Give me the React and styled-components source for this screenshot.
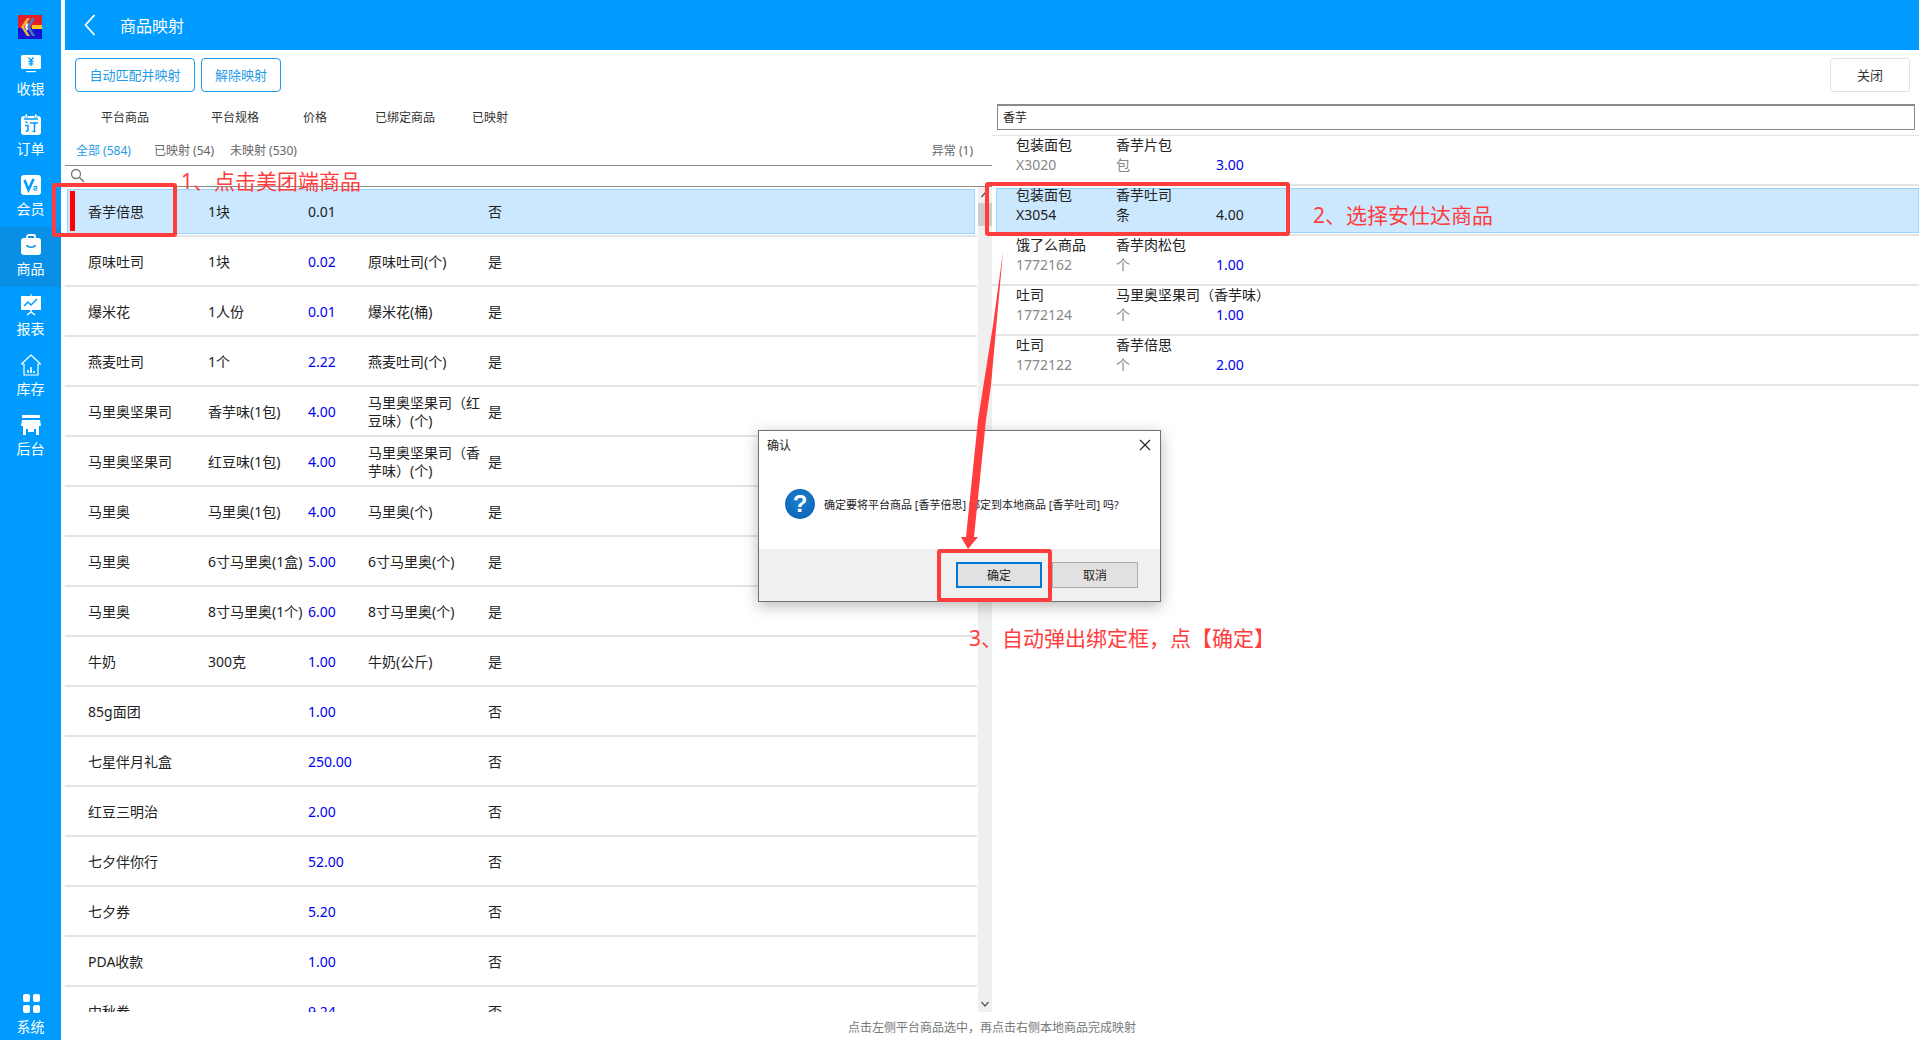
import React from 'react';
import styled, { createGlobalStyle } from 'styled-components';

const FONT = '"Noto Sans", "Noto Sans CJK SC", sans-serif';
const BLUE = '#009bff';
const RED = '#ff3d3d';

const GlobalStyle = createGlobalStyle`
  html, body { margin: 0; padding: 0; background: #fff; }
  body { font-family: ${FONT}; color: #222; }
  * { box-sizing: border-box; }
`;

const Page = styled.div`
  position: relative;
  width: 100vw;
  height: 100vh;
  overflow: hidden;
  display: flex;
  background: #fff;
`;

// Barra lateral
const Sidebar = styled.nav`
  width: 61px;
  flex: none;
  background: ${BLUE};
  display: flex;
  flex-direction: column;
`;
const LogoBox = styled.div`
  height: 47px;
  padding: 15px 0 0 18px;
`;
const NavItem = styled.div`
  height: 60px;
  display: flex;
  flex-direction: column;
  align-items: center;
  justify-content: flex-end;
  padding-bottom: ${(p) => (p.$last ? '4px' : '9px')};
  color: #fff;
  font-size: 14px;
  line-height: 18px;
  gap: 3px;
  background: ${(p) => (p.$active ? '#0a8fe6' : 'transparent')};
  margin-top: ${(p) => (p.$last ? 'auto' : '0')};
  svg { display: block; }
`;

const Main = styled.div`
  flex: 1;
  min-width: 0;
  margin-left: 4px;
  display: flex;
  flex-direction: column;
`;
const Header = styled.header`
  height: 50px;
  flex: none;
  background: ${BLUE};
  display: flex;
  align-items: center;
  padding: 0 0 1px 19px;
  gap: 24px;
  color: #fff;
  font-size: 16px;
`;
const Toolbar = styled.div`
  height: 50px;
  flex: none;
  display: flex;
  align-items: flex-start;
  padding: 8px 9px 0 10px;
  gap: 6px;
`;
const OutlineButton = styled.button`
  height: 34px;
  width: ${(p) => p.$w}px;
  padding: 0 0 2px;
  background: #fff;
  border: 1px solid #1f9bea;
  border-radius: 4px;
  color: #1f9bea;
  font: 13px ${FONT};
`;
const CloseButton = styled.button`
  height: 34px;
  width: 80px;
  margin-left: auto;
  padding: 0 0 2px;
  background: #fff;
  border: 1px solid #e2e2e2;
  border-radius: 3px;
  color: #333;
  font: 13px ${FONT};
`;

const Panels = styled.div`
  flex: 1;
  min-height: 0;
  display: flex;
`;
const LeftPanel = styled.section`
  width: 927px;
  flex: none;
  display: flex;
  flex-direction: column;
`;
const ColumnHead = styled.div`
  height: 34px;
  flex: none;
  display: flex;
  align-items: center;
  padding-left: 36px;
  font-size: 12px;
  color: #333;
`;
const HeadCell = styled.span`
  width: ${(p) => p.$w}px;
  flex: none;
`;
const Tabs = styled.div`
  height: 31px;
  flex: none;
  display: flex;
  align-items: center;
  padding: 0 19px 0 11px;
  font-size: 12px;
  color: #666;
`;
const Tab = styled.span`
  width: ${(p) => p.$w}px;
  color: ${(p) => (p.$active ? '#1f9bea' : '#666')};
`;
const TabRight = styled.span`
  margin-left: auto;
`;
const SearchRow = styled.div`
  height: 22px;
  flex: none;
  border-top: 1px solid #8a8a8a;
  border-bottom: 1px solid #8a8a8a;
  padding: 2px 0 0 5px;
  svg { display: block; }
`;
const ListArea = styled.div`
  height: 825px;
  flex: none;
  display: flex;
  overflow: hidden;
`;
const List = styled.div`
  flex: 1;
  min-width: 0;
  margin-right: 1px;
`;
const Row = styled.div`
  position: relative;
  height: 50px;
  border-bottom: 2px solid #e4e4e4;
  display: grid;
  grid-template-columns: 120px 100px 60px 120px 1fr;
  padding: 2px 0 0 23px;
  align-items: center;
  font-size: 14px;
  line-height: 18px;
  color: #222;
  ${(p) => p.$selected && `
    &::before {
      content: '';
      position: absolute;
      inset: 2px 2px 1px 2px;
      background: #cce8ff;
      border: 1px solid #99d1ff;
    }
    &::after {
      content: '';
      position: absolute;
      left: 5px;
      top: 4px;
      width: 5px;
      height: 40px;
      background: #f00;
    }
    & > span { position: relative; z-index: 1; }
  `}
`;
const Cell = styled.span`
  padding-right: 6px;
  white-space: ${(p) => (p.$wrap ? 'normal' : 'nowrap')};
`;
const Price = styled.span`
  color: ${(p) => (p.$plain ? '#222' : '#0000ee')};
`;
const ScrollTrack = styled.div`
  position: relative;
  width: 14px;
  flex: none;
  background: #efefef;
  svg { position: absolute; left: 3px; }
`;
const ScrollThumb = styled.div`
  position: absolute;
  left: 0;
  right: 0;
  top: 16px;
  height: 23px;
  background: #cdcdcd;
`;

const RightPanel = styled.section`
  flex: 1;
  min-width: 0;
  display: flex;
  flex-direction: column;
  padding-top: 4px;
`;
const SearchInput = styled.div`
  height: 26px;
  margin: 0 4px 5px 5px;
  padding-left: 5px;
  border: 1px solid #8a8a8a;
  border-top-width: 2px;
  font-size: 12px;
  line-height: 24px;
  color: #222;
`;
const RightList = styled.div`
  border-top: 1px solid #e4e4e4;
`;
const RightRow = styled.div`
  position: relative;
  height: 50px;
  border-bottom: 2px solid #e4e4e4;
  display: grid;
  grid-template-columns: 100px 100px 1fr;
  grid-auto-rows: 20px;
  padding-left: 24px;
  margin-top: 0;
  font-size: 14px;
  line-height: 18px;
  ${(p) => p.$selected && `
    &::before {
      content: '';
      position: absolute;
      inset: 2px 0 1px 4px;
      background: #cce8ff;
      border: 1px solid #99d1ff;
    }
    & > span { position: relative; z-index: 1; }
  `}
`;
const RightCell = styled.span`
  white-space: nowrap;
  color: ${(p) => (p.$muted ? '#888' : '#222')};
`;
const RightPrice = styled.span`
  color: ${(p) => (p.$plain ? '#222' : '#0000ee')};
`;

const Footer = styled.footer`
  height: 28px;
  flex: none;
  display: flex;
  align-items: center;
  justify-content: center;
  padding-top: 2px;
  font-size: 12px;
  color: #777;
`;

// Capas de anotación sobre la captura
const Note = styled.div`
  position: absolute;
  left: ${(p) => p.$x}px;
  top: ${(p) => p.$y}px;
  color: ${RED};
  font-size: 21px;
  line-height: 28px;
  white-space: nowrap;
  z-index: 5;
`;
const Mark = styled.div`
  position: absolute;
  left: ${(p) => p.$x}px;
  top: ${(p) => p.$y}px;
  width: ${(p) => p.$w}px;
  height: ${(p) => p.$h}px;
  border: 4px solid ${RED};
  border-radius: 3px;
  z-index: 5;
`;
const ArrowLayer = styled.svg`
  position: absolute;
  left: 0;
  top: 0;
  z-index: 4;
  pointer-events: none;
`;

const Dialog = styled.div`
  position: absolute;
  left: 758px;
  top: 430px;
  width: 403px;
  height: 172px;
  background: #fff;
  border: 1px solid #707070;
  box-shadow: 0 4px 14px rgba(0, 0, 0, 0.28);
  display: flex;
  flex-direction: column;
  z-index: 3;
`;
const DialogTitle = styled.div`
  height: 30px;
  flex: none;
  display: flex;
  align-items: center;
  justify-content: space-between;
  padding: 0 9px 2px 8px;
  font-size: 12px;
  color: #222;
`;
const DialogBody = styled.div`
  flex: 1;
  display: flex;
  align-items: center;
  gap: 9px;
  padding: 0 0 3px 26px;
  font-size: 11px;
  color: #222;
  white-space: nowrap;
`;
const QuestionIcon = styled.div`
  width: 30px;
  height: 30px;
  flex: none;
  border-radius: 50%;
  background: radial-gradient(circle at 50% 40%, #1a7fd0, #0a5fae);
  color: #fff;
  font: bold 24px/30px "Liberation Sans", sans-serif;
  text-align: center;
`;
const DialogFooter = styled.div`
  height: 52px;
  flex: none;
  background: #f0f0f0;
  display: flex;
  justify-content: flex-end;
  align-items: flex-start;
  gap: 10px;
  padding: 13px 22px 0 0;
`;
const DialogButton = styled.button`
  width: 86px;
  height: 26px;
  padding: 0;
  background: #e1e1e1;
  border: ${(p) => (p.$primary ? '2px solid #0078d7' : '1px solid #adadad')};
  font: 12px ${FONT};
  color: #222;
`;

const Logo = () => (
  <svg width="24" height="24" viewBox="0 0 24 24">
    <rect width="24" height="13" fill="#e3202a" />
    <rect y="13" width="24" height="11" fill="#1414d2" />
    <rect x="14" y="10" width="10" height="4" fill="#f6c51f" />
    <path d="M9 3 3 12l6 9h3l-6-9 6-9z" fill="#f2b23a" />
    <path d="M9 7 7 12l2 4 2-4z" fill="#fff" />
    <path d="M14 3 9 12l5 9h3l-5-9 5-9z" fill="#4c78c8" />
  </svg>
);

const Ico = ({ children }) => (
  <svg width="24" height="24" viewBox="0 0 24 24">{children}</svg>
);

const IconCash = () => (
  <Ico>
    <rect x="2" y="2" width="20" height="14" rx="1.500" fill="#fff" />
    <rect x="7" y="18" width="10" height="1.200" fill="#fff" />
    <path d="M9.500 4.500 12 7.500l2.500-3M12 7.500V13M9.500 8.500h5M9.500 10.800h5" stroke={BLUE} strokeWidth="1.300" fill="none" />
  </Ico>
);
const IconOrder = () => (
  <Ico>
    <rect x="2" y="3" width="20" height="19" rx="3" fill="#fff" />
    <rect x="6" y="1" width="2.500" height="4" rx="1" fill="#fff" stroke={BLUE} strokeWidth="0.600" />
    <rect x="15.500" y="1" width="2.500" height="4" rx="1" fill="#fff" stroke={BLUE} strokeWidth="0.600" />
    <path d="M5 6h14M6.500 8.500l2 1.500M6 12.500h3v5l-2 1M11 10h8M15.500 10v8.500h-2" stroke={BLUE} strokeWidth="1.500" fill="none" />
  </Ico>
);
const IconMember = () => (
  <Ico>
    <rect x="2" y="2" width="20" height="20" rx="3" fill="#fff" />
    <path d="M5.500 7l4 10 5-11" stroke={BLUE} strokeWidth="2.600" fill="none" />
    <path d="M14.500 13.500h3.500v1.700h-3v1.800h3.500" stroke={BLUE} strokeWidth="1" fill="none" />
  </Ico>
);
const IconGoods = () => (
  <Ico>
    <path d="M8 5V3.500C8 2.500 9 2 10 2h4c1 0 2 .5 2 1.500V5" stroke="#fff" strokeWidth="1.800" fill="none" />
    <rect x="2" y="5" width="20" height="17" rx="3" fill="#fff" />
    <path d="M7.500 12c1.500 3 7.500 3 9 0" stroke="#0a8fe6" strokeWidth="1.600" fill="none" />
  </Ico>
);
const IconReport = () => (
  <Ico>
    <rect x="11.500" y="1" width="1" height="2" fill="#fff" />
    <rect x="2" y="3" width="20" height="14" fill="#fff" />
    <path d="M5 13l4-4 3 3 6-6" stroke={BLUE} strokeWidth="1.500" fill="none" />
    <path d="M12 17v2M8 22l4-3 4 3" stroke="#fff" strokeWidth="1.500" fill="none" />
  </Ico>
);
const IconStock = () => (
  <Ico>
    <path d="M12 2 2.500 11H5v11h14V11h2.500z" stroke="#fff" strokeWidth="1.200" fill="none" strokeLinejoin="round" />
    <path d="M9 20v-3M12 20v-6M15 20v-2" stroke="#fff" strokeWidth="1.600" fill="none" />
  </Ico>
);
const IconShop = () => (
  <Ico>
    <rect x="3" y="2" width="18" height="3" fill="#fff" />
    <path d="M3 7h18l1 6H2z" fill="#fff" />
    <path fillRule="evenodd" d="M4 13h16v9h-3v-6H7v6H4z" fill="#fff" />
    <rect x="9" y="16" width="6" height="3" fill="#fff" />
  </Ico>
);
const IconSystem = () => (
  <Ico>
    <rect x="4" y="3" width="7" height="8" rx="2" fill="#fff" />
    <rect x="14" y="3" width="7" height="8" rx="2" fill="#fff" />
    <rect x="4" y="14" width="7" height="8" rx="2" fill="#fff" />
    <rect x="14" y="14" width="7" height="8" rx="2" fill="#fff" />
  </Ico>
);

const NAV = [
  ['收银', IconCash],
  ['订单', IconOrder],
  ['会员', IconMember],
  ['商品', IconGoods, true],
  ['报表', IconReport],
  ['库存', IconStock],
  ['后台', IconShop],
];

const ROWS = [
  ['香芋倍思', '1块', '0.01', '', '否', true],
  ['原味吐司', '1块', '0.02', '原味吐司(个)', '是'],
  ['爆米花', '1人份', '0.01', '爆米花(桶)', '是'],
  ['燕麦吐司', '1个', '2.22', '燕麦吐司(个)', '是'],
  ['马里奥坚果司', '香芋味(1包)', '4.00', '马里奥坚果司（红豆味）(个)', '是'],
  ['马里奥坚果司', '红豆味(1包)', '4.00', '马里奥坚果司（香芋味）(个)', '是'],
  ['马里奥', '马里奥(1包)', '4.00', '马里奥(个)', '是'],
  ['马里奥', '6寸马里奥(1盒)', '5.00', '6寸马里奥(个)', '是'],
  ['马里奥', '8寸马里奥(1个)', '6.00', '8寸马里奥(个)', '是'],
  ['牛奶', '300克', '1.00', '牛奶(公斤)', '是'],
  ['85g面团', '', '1.00', '', '否'],
  ['七星伴月礼盒', '', '250.00', '', '否'],
  ['红豆三明治', '', '2.00', '', '否'],
  ['七夕伴你行', '', '52.00', '', '否'],
  ['七夕券', '', '5.20', '', '否'],
  ['PDA收款', '', '1.00', '', '否'],
  ['中秋券', '', '9.24', '', '否'],
];

const LOCAL = [
  ['包装面包', '香芋片包', 'X3020', '包', '3.00'],
  ['包装面包', '香芋吐司', 'X3054', '条', '4.00', true],
  ['饿了么商品', '香芋肉松包', '1772162', '个', '1.00'],
  ['吐司', '马里奥坚果司（香芋味）', '1772124', '个', '1.00'],
  ['吐司', '香芋倍思', '1772122', '个', '2.00'],
];

const App = () => {
  return (
    <Page>
      <GlobalStyle />
      <Sidebar>
        <LogoBox><Logo /></LogoBox>
        {NAV.map(([label, Icon, active]) => (
          <NavItem key={label} $active={active}>
            <Icon />
            <span>{label}</span>
          </NavItem>
        ))}
        <NavItem $last>
          <IconSystem />
          <span>系统</span>
        </NavItem>
      </Sidebar>

      <Main>
        <Header>
          <svg width="12" height="22" viewBox="0 0 12 22">
            <path d="M10.500 1 1.500 11l9 10" stroke="#fff" strokeWidth="1.800" fill="none" />
          </svg>
          <span>商品映射</span>
        </Header>
        <Toolbar>
          <OutlineButton $w={120}>自动匹配并映射</OutlineButton>
          <OutlineButton $w={80}>解除映射</OutlineButton>
          <CloseButton>关闭</CloseButton>
        </Toolbar>

        <Panels>
          <LeftPanel>
            <ColumnHead>
              <HeadCell $w={110}>平台商品</HeadCell>
              <HeadCell $w={92}>平台规格</HeadCell>
              <HeadCell $w={72}>价格</HeadCell>
              <HeadCell $w={97}>已绑定商品</HeadCell>
              <HeadCell $w={60}>已映射</HeadCell>
            </ColumnHead>
            <Tabs>
              <Tab $w={78} $active>全部 (584)</Tab>
              <Tab $w={76}>已映射 (54)</Tab>
              <Tab $w={90}>未映射 (530)</Tab>
              <TabRight>异常 (1)</TabRight>
            </Tabs>
            <SearchRow>
              <svg width="15" height="15" viewBox="0 0 15 15">
                <circle cx="6" cy="6" r="4.500" stroke="#777" strokeWidth="1.300" fill="none" />
                <path d="M9.500 9.500 14 14" stroke="#777" strokeWidth="1.500" />
              </svg>
            </SearchRow>
            <ListArea>
              <List>
                {ROWS.map(([name, spec, price, bound, flag, selected], i) => (
                  <Row key={i} $selected={selected}>
                    <Cell>{name}</Cell>
                    <Cell>{spec}</Cell>
                    <Price $plain={selected}>{price}</Price>
                    <Cell $wrap>{bound}</Cell>
                    <Cell>{flag}</Cell>
                  </Row>
                ))}
              </List>
              <ScrollTrack>
                <svg width="8" height="6" viewBox="0 0 8 6" style={{ top: 5 }}>
                  <path d="M0.500 5 4 1l3.500 4" stroke="#555" strokeWidth="1.300" fill="none" />
                </svg>
                <ScrollThumb />
                <svg width="8" height="6" viewBox="0 0 8 6" style={{ bottom: 5 }}>
                  <path d="M0.500 1 4 5l3.500-4" stroke="#555" strokeWidth="1.300" fill="none" />
                </svg>
              </ScrollTrack>
            </ListArea>
          </LeftPanel>

          <RightPanel>
            <SearchInput>香芋</SearchInput>
            <RightList>
              {LOCAL.map(([brand, name, code, unit, price, selected]) => (
                <RightRow key={code} $selected={selected}>
                  <RightCell>{brand}</RightCell>
                  <RightCell>{name}</RightCell>
                  <span />
                  <RightCell $muted={!selected}>{code}</RightCell>
                  <RightCell $muted={!selected}>{unit}</RightCell>
                  <RightPrice $plain={selected}>{price}</RightPrice>
                </RightRow>
              ))}
            </RightList>
          </RightPanel>
        </Panels>
        <Footer>点击左侧平台商品选中，再点击右侧本地商品完成映射</Footer>
      </Main>

      <Dialog>
        <DialogTitle>
          <span>确认</span>
          <svg width="12" height="12" viewBox="0 0 12 12">
            <path d="M1 1l10 10M11 1 1 11" stroke="#222" strokeWidth="1.100" />
          </svg>
        </DialogTitle>
        <DialogBody>
          <QuestionIcon>?</QuestionIcon>
          <span>确定要将平台商品 [香芋倍思] 绑定到本地商品 [香芋吐司] 吗?</span>
        </DialogBody>
        <DialogFooter>
          <DialogButton $primary>确定</DialogButton>
          <DialogButton>取消</DialogButton>
        </DialogFooter>
      </Dialog>

      <ArrowLayer width="1919" height="1040" viewBox="0 0 1919 1040">
        <path d="M1003 252 993 325 978 420 966 537 961 537 968 549 978 537 974 537 986 420 991 385z" fill={RED} />
      </ArrowLayer>

      <Mark $x={52} $y={183} $w={125} $h={54} />
      <Mark $x={985} $y={182} $w={305} $h={54} />
      <Mark $x={937} $y={549} $w={115} $h={53} />
      <Note $x={181} $y={167}>1、点击美团端商品</Note>
      <Note $x={1313} $y={201}>2、选择安仕达商品</Note>
      <Note $x={969} $y={624}>3、自动弹出绑定框，点【确定】</Note>
    </Page>
  );
};

export default App;
